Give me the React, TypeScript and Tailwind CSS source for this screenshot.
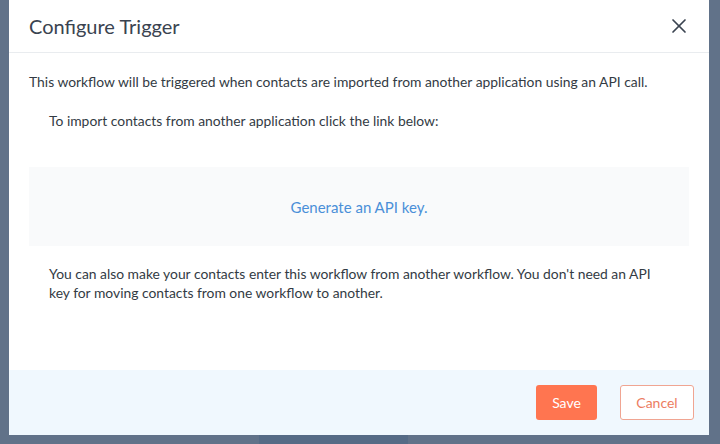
import { X } from 'lucide-react';

export default function App() {
  return (
    <div className="w-[720px] h-[444px] bg-[#617289] overflow-hidden font-['Lato',sans-serif]">
      <div className="ml-[9px] w-[700px] h-[435px] bg-white flex flex-col">
        <div className="h-[53px] shrink-0 flex items-center justify-between pl-5 pr-[18px] border-b border-[#e9ecef]">
          <h2 className="text-[20px] leading-6 text-[#3a4350]">Configure Trigger</h2>
          <button className="text-[#3a4350]">
            <X size={24} strokeWidth={1.7} />
          </button>
        </div>

        <div className="flex-1 px-5 pt-[19px] text-[13.86px] leading-5 text-[#333b44]">
          <p>This workflow will be triggered when contacts are imported from another application using an API call.</p>
          <p className="mt-[19px] px-5">To import contacts from another application click the link below:</p>
          <div className="mt-[36px] h-[79px] bg-[#f9fafb] flex items-center justify-center">
            <a className="text-[#4a8fd8] text-[15px] pt-[1px] cursor-pointer">Generate an API key.</a>
          </div>
          <p className="mt-[18px] px-5 leading-[19px]">
            You can also make your contacts enter this workflow from another workflow. You don't need an API key for moving contacts from one workflow to another.
          </p>
        </div>

        <div className="h-[65px] shrink-0 bg-[#f0f8fe] flex items-center justify-end gap-[23px] pr-[15px]">
          <button className="w-[61px] h-[35px] rounded-[3px] bg-[#ff7550] text-white text-[14px]">Save</button>
          <button className="w-[74px] h-[35px] rounded-[3px] bg-white border border-[#f0a592] text-[#ec7d62] text-[14px]">Cancel</button>
        </div>
      </div>
      <div className="ml-[259px] w-[149px] h-[9px] bg-[#566b86]" />
    </div>
  );
}
